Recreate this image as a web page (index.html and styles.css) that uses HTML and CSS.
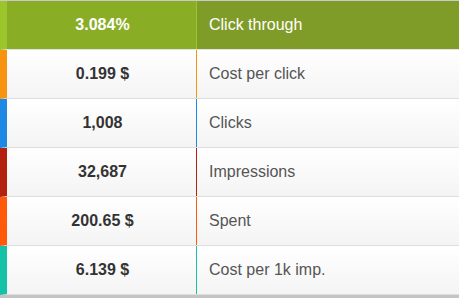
FILE: index.html
```html
<!DOCTYPE html>
<html>
<head>
<meta charset="utf-8">
<link rel="stylesheet" href="styles.css">
</head>
<body>
<div class="table">
  <div class="row head c-green">
    <div class="val">3.084%</div>
    <div class="label">Click through</div>
  </div>
  <div class="row c-orange">
    <div class="val">0.199 $</div>
    <div class="label">Cost per click</div>
  </div>
  <div class="row c-blue">
    <div class="val">1,008</div>
    <div class="label">Clicks</div>
  </div>
  <div class="row c-red">
    <div class="val">32,687</div>
    <div class="label">Impressions</div>
  </div>
  <div class="row c-flame">
    <div class="val">200.65 $</div>
    <div class="label">Spent</div>
  </div>
  <div class="row c-teal">
    <div class="val">6.139 $</div>
    <div class="label">Cost per 1k imp.</div>
  </div>
  <div class="bottom"></div>
</div>
</body>
</html>
```
FILE: styles.css
```css
html, body {
  margin: 0;
  padding: 0;
  background: #fff;
}
.table {
  width: 459px;
  border-top: 1px solid #c9c9c9;
  font-family: "Liberation Sans", Arial, sans-serif;
}
.row {
  display: flex;
  height: 48px;
  border-bottom: 1px solid #dedede;
  border-left: 7px solid var(--c);
  background: linear-gradient(#ffffff, #f4f4f4);
}
.val {
  width: 190px;
  display: flex;
  align-items: center;
  justify-content: center;
  padding: 0 0 1px 2px;
  box-sizing: border-box;
  font-weight: bold;
  font-size: 16px;
  color: #333;
  border-right: 1px solid var(--c);
}
.label {
  flex: 1;
  display: flex;
  align-items: center;
  padding-left: 12px;
  padding-bottom: 1px;
  font-size: 16px;
  color: #555;
}
.head {
  background: none;
  border-bottom-color: #e3e3e3;
}
.head .val {
  background: #8aad26;
  color: #fff;
  border-right-color: #9cc52c;
}
.head .label {
  background: #7f9c29;
  color: #fff;
}
.c-green { --c: #9cc52c; }
.c-orange { --c: #f7930f; }
.c-blue { --c: #1e88e5; }
.c-red { --c: #b3220f; }
.c-flame { --c: #ff5a0a; }
.c-teal { --c: #16c2a6; }
.bottom {
  height: 3px;
  background: #c4c4c4;
}
```
